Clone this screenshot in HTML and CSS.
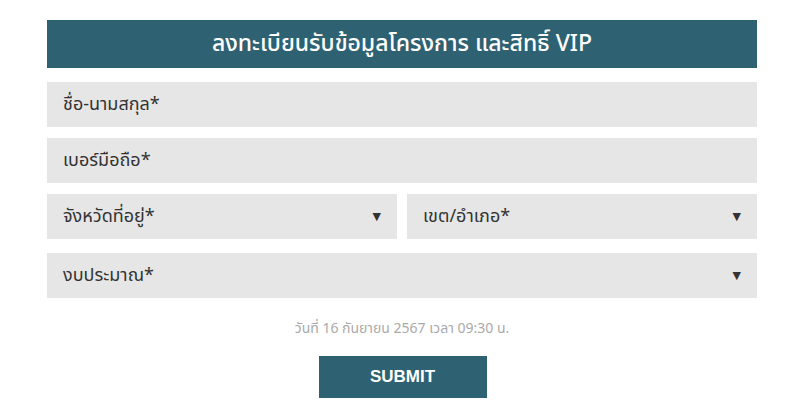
FILE: index.html
```html
<!DOCTYPE html>
<html lang="th">
<head>
<meta charset="utf-8">
<link rel="stylesheet" href="styles.css">
</head>
<body>
<form class="form">
  <h2 class="title">ลงทะเบียนรับข้อมูลโครงการ และสิทธิ์ VIP</h2>
  <div class="field">ชื่อ-นามสกุล*</div>
  <div class="field">เบอร์มือถือ*</div>
  <div class="row">
    <div class="field select">จังหวัดที่อยู่*<span class="arrow">▼</span></div>
    <div class="field select">เขต/อำเภอ*<span class="arrow">▼</span></div>
  </div>
  <div class="field select last">งบประมาณ*<span class="arrow">▼</span></div>
  <p class="date">วันที่ 16 กันยายน 2567 เวลา 09:30 น.</p>
  <div class="actions"><button type="button" class="submit">SUBMIT</button></div>
</form>
</body>
</html>
```
FILE: styles.css
```css
* { box-sizing: border-box; }
html, body { margin: 0; padding: 0; background: #fff; }
body {
  font-family: "Noto Sans Thai", "Noto Sans Thai UI", "Liberation Sans", "Noto Sans", sans-serif;
  color: #333;
}
.form {
  width: 710px;
  margin: 0 0 0 47px;
  padding-top: 20px;
}
.title {
  margin: 0 0 14px;
  height: 48px;
  background: #2e6172;
  color: #fff;
  font-size: 23px;
  font-weight: 500;
  display: flex;
  align-items: center;
  justify-content: center;
}
.field {
  height: 45px;
  background: #e6e6e6;
  margin-bottom: 11px;
  padding: 0 16px;
  display: flex;
  align-items: center;
  font-size: 18px;
  color: #333;
}
.row {
  display: flex;
  gap: 10px;
}
.row .field { flex: 1; margin-bottom: 14px; }
.select { justify-content: space-between; }
.arrow { font-size: 11px; color: #333; font-family: "DejaVu Sans", sans-serif; }
.field.last { margin-bottom: 0; }
.date {
  margin: 0;
  padding: 20px 0 0;
  height: 58px;
  text-align: center;
  font-size: 14px;
  color: #aaa;
}
.actions { display: flex; justify-content: center; }
.submit {
  width: 168px;
  height: 42px;
  margin-left: 1px;
  border: 0;
  background: #2e6172;
  color: #fff;
  font-family: "Liberation Sans", Arial, sans-serif;
  font-weight: bold;
  font-size: 17px;
}
```
